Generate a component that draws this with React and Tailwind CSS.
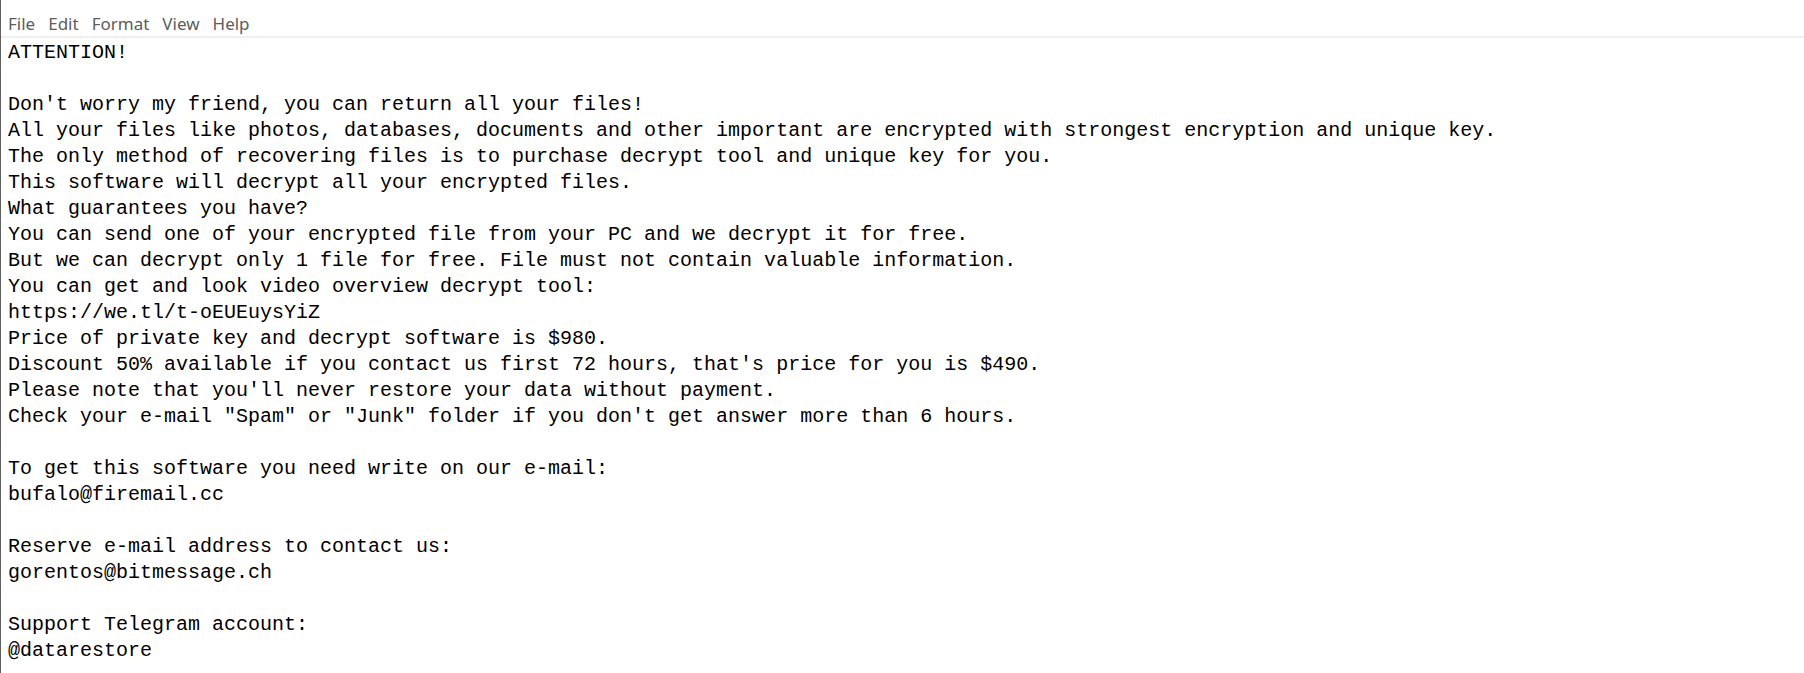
const lines = [
  "ATTENTION!",
  "",
  "Don't worry my friend, you can return all your files!",
  "All your files like photos, databases, documents and other important are encrypted with strongest encryption and unique key.",
  "The only method of recovering files is to purchase decrypt tool and unique key for you.",
  "This software will decrypt all your encrypted files.",
  "What guarantees you have?",
  "You can send one of your encrypted file from your PC and we decrypt it for free.",
  "But we can decrypt only 1 file for free. File must not contain valuable information.",
  "You can get and look video overview decrypt tool:",
  "https://we.tl/t-oEUEuysYiZ",
  "Price of private key and decrypt software is $980.",
  "Discount 50% available if you contact us first 72 hours, that's price for you is $490.",
  "Please note that you'll never restore your data without payment.",
  "Check your e-mail \"Spam\" or \"Junk\" folder if you don't get answer more than 6 hours.",
  "",
  "To get this software you need write on our e-mail:",
  "bufalo@firemail.cc",
  "",
  "Reserve e-mail address to contact us:",
  "gorentos@bitmessage.ch",
  "",
  "Support Telegram account:",
  "@datarestore",
];

const menu = ["File", "Edit", "Format", "View", "Help"];

export default function App() {
  return (
    <div className="w-full h-[673px] bg-white border-l border-[#5f5f5f] flex flex-col overflow-hidden">
      <div className="h-[38px] flex items-end pb-[4px] pl-[7px] gap-[13px] border-b-2 border-[#f0f0f0] shrink-0">
        {menu.map((m) => (
          <span
            key={m}
            className="text-[17px] text-[#5c5c5c] font-['Noto_Sans',sans-serif] leading-none"
          >
            {m}
          </span>
        ))}
      </div>
      <div className="pt-[2px] pl-[7px] font-['Liberation_Mono',monospace] text-[20px] leading-[26px] text-black whitespace-pre">
        {lines.map((l, i) => (
          <div key={i} className="h-[26px]">
            {l}
          </div>
        ))}
      </div>
    </div>
  );
}
